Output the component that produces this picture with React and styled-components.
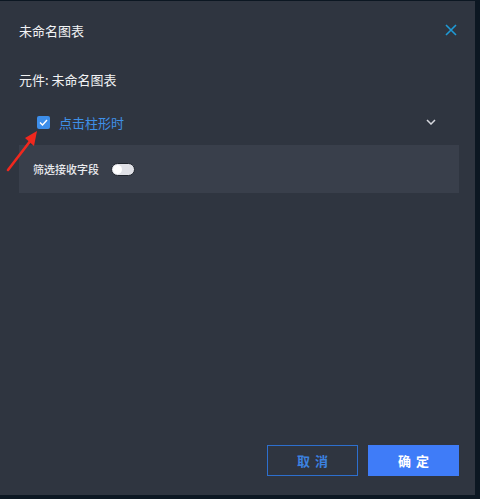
import React from "react";
import styled, { createGlobalStyle } from "styled-components";

const Global = createGlobalStyle`
  html, body { margin: 0; padding: 0; background: #0c1722; }
  body { font-family: "Noto Sans CJK SC", "Noto Sans", sans-serif; }
  * { box-sizing: border-box; }
`;

const Dialog = styled.div`
  position: relative;
  margin-top: 1px;
  width: 475px;
  height: 494px;
  background: #2f3540;
  display: flex;
  flex-direction: column;
  padding: 0 16px 0 19px;
`;

const Header = styled.div`
  height: 58px;
  display: flex;
  align-items: center;
  justify-content: space-between;
`;

const Title = styled.div`
  color: #f2f3f5;
  font-size: 13px;
`;

const CloseBtn = styled.div`
  width: 14px;
  height: 14px;
  margin-right: 1px;
  display: flex;
`;

const Subtitle = styled.div`
  color: #f2f3f5;
  font-size: 13px;
  height: 20px;
  line-height: 20px;
  margin-top: 11px;
`;

const EventRow = styled.div`
  margin-top: 22px;
  height: 20px;
  display: flex;
  align-items: center;
  padding-left: 18px;
  padding-right: 23px;
`;

const Check = styled.div`
  width: 13px;
  height: 13px;
  border-radius: 2px;
  background: #3d8eea;
  display: flex;
  align-items: center;
  justify-content: center;
`;

const EventLabel = styled.div`
  color: #3f90e8;
  font-size: 13px;
  margin-left: 9px;
  flex: 1;
`;

const Panel = styled.div`
  margin-top: 13px;
  height: 48px;
  background: #393f4b;
  display: flex;
  align-items: center;
  padding-left: 14px;
  gap: 12px;
`;

const PanelLabel = styled.div`
  color: #e9eaee;
  font-size: 11px;
  font-weight: 500;
`;

const Toggle = styled.div`
  width: 24px;
  height: 13px;
  border-radius: 7px;
  background: #dfe0e6;
  border: 1px solid #1f242c;
  position: relative;
  margin-top: 1px;
`;

const Knob = styled.div`
  position: absolute;
  left: 1px;
  top: 1px;
  width: 9px;
  height: 9px;
  border-radius: 50%;
  background: #ffffff;
`;

const Spacer = styled.div`
  flex: 1;
`;

const Footer = styled.div`
  display: flex;
  justify-content: flex-end;
  gap: 10px;
  margin-bottom: 19px;
`;

const Button = styled.div`
  width: 91px;
  height: 31px;
  display: flex;
  align-items: center;
  justify-content: center;
  font-size: 13px;
  font-weight: 700;
  letter-spacing: 5px;
  text-indent: 5px;
  cursor: pointer;
  border-width: 1px;
  border-style: solid;
  border-color: ${(p) => (p.$primary ? "#3f7cf8" : "#2d6fce")};
  background: ${(p) => (p.$primary ? "#3f7cf8" : "transparent")};
  color: ${(p) => (p.$primary ? "#ffffff" : "#3c82e0")};
`;

const Arrow = styled.svg`
  position: absolute;
  left: 4px;
  top: 125px;
`;

export default function App() {
  return (
    <>
      <Global />
      <Dialog>
        <Header>
          <Title>未命名图表</Title>
          <CloseBtn>
            <svg width="14" height="14" viewBox="0 0 14 14">
              <path d="M2 2L12 12M12 2L2 12" stroke="#1e9ad6" strokeWidth="1.6" fill="none" />
            </svg>
          </CloseBtn>
        </Header>
        <Subtitle>元件: 未命名图表</Subtitle>
        <EventRow>
          <Check>
            <svg width="9" height="7" viewBox="0 0 9 7">
              <path d="M1 3.5L3.5 6L8 1" stroke="#fff" strokeWidth="1.4" fill="none" />
            </svg>
          </Check>
          <EventLabel>点击柱形时</EventLabel>
          <svg width="10" height="6" viewBox="0 0 10 6">
            <path d="M1 1L5 5L9 1" stroke="#d6d8de" strokeWidth="1.5" fill="none" />
          </svg>
        </EventRow>
        <Panel>
          <PanelLabel>筛选接收字段</PanelLabel>
          <Toggle>
            <Knob />
          </Toggle>
        </Panel>
        <Spacer />
        <Footer>
          <Button role="button">取消</Button>
          <Button role="button" $primary>确定</Button>
        </Footer>
        <Arrow width="40" height="48" viewBox="0 0 40 48">
          <path d="M4 44L27 14" stroke="#f0281e" strokeWidth="2.6" strokeLinecap="round" fill="none" />
          <path d="M33 5L21 12L30 20Z" fill="#f0281e" />
        </Arrow>
      </Dialog>
    </>
  );
}
